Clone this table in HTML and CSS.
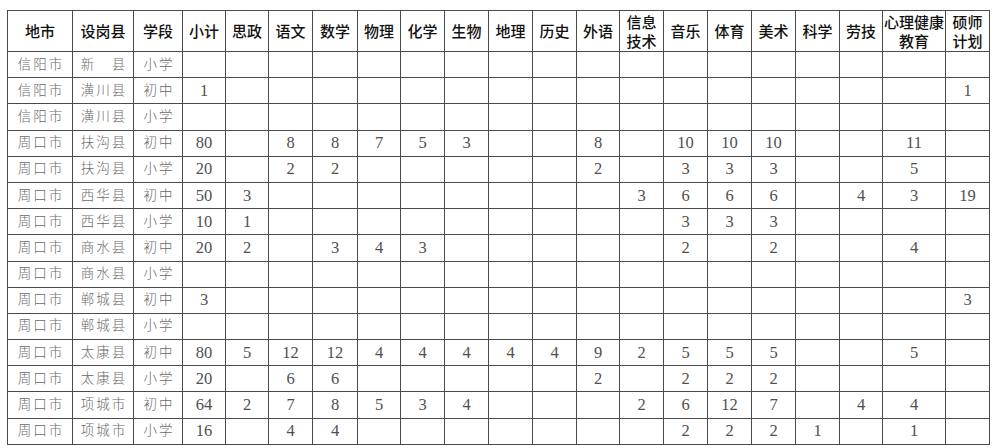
FILE: index.html
```html
<!DOCTYPE html>
<html lang="zh">
<head>
<meta charset="utf-8">
<title>岗位计划表</title>
<link rel="stylesheet" href="styles.css">
</head>
<body>
<table class="plan">
<colgroup>
<col class="w65"><col class="w61"><col class="w49"><col class="w43"><col class="w43"><col class="w44"><col class="w45"><col class="w43"><col class="w44"><col class="w44"><col class="w44"><col class="w44"><col class="w43"><col class="w44"><col class="w44"><col class="w44"><col class="w44"><col class="w44"><col class="w43"><col class="w63"><col class="w44">
</colgroup>
<thead>
<tr><th>地市</th><th>设岗县</th><th>学段</th><th>小计</th><th>思政</th><th>语文</th><th>数学</th><th>物理</th><th>化学</th><th>生物</th><th>地理</th><th>历史</th><th>外语</th><th>信息<br>技术</th><th>音乐</th><th>体育</th><th>美术</th><th>科学</th><th>劳技</th><th>心理健康<br>教育</th><th>硕师<br>计划</th></tr>
</thead>
<tbody>
<tr><td class="t">信阳市</td><td class="t">新　县</td><td class="t">小学</td><td></td><td></td><td></td><td></td><td></td><td></td><td></td><td></td><td></td><td></td><td></td><td></td><td></td><td></td><td></td><td></td><td></td><td></td></tr>
<tr><td class="t">信阳市</td><td class="t">潢川县</td><td class="t">初中</td><td>1</td><td></td><td></td><td></td><td></td><td></td><td></td><td></td><td></td><td></td><td></td><td></td><td></td><td></td><td></td><td></td><td></td><td>1</td></tr>
<tr><td class="t">信阳市</td><td class="t">潢川县</td><td class="t">小学</td><td></td><td></td><td></td><td></td><td></td><td></td><td></td><td></td><td></td><td></td><td></td><td></td><td></td><td></td><td></td><td></td><td></td><td></td></tr>
<tr><td class="t">周口市</td><td class="t">扶沟县</td><td class="t">初中</td><td>80</td><td></td><td>8</td><td>8</td><td>7</td><td>5</td><td>3</td><td></td><td></td><td>8</td><td></td><td>10</td><td>10</td><td>10</td><td></td><td></td><td>11</td><td></td></tr>
<tr><td class="t">周口市</td><td class="t">扶沟县</td><td class="t">小学</td><td>20</td><td></td><td>2</td><td>2</td><td></td><td></td><td></td><td></td><td></td><td>2</td><td></td><td>3</td><td>3</td><td>3</td><td></td><td></td><td>5</td><td></td></tr>
<tr><td class="t">周口市</td><td class="t">西华县</td><td class="t">初中</td><td>50</td><td>3</td><td></td><td></td><td></td><td></td><td></td><td></td><td></td><td></td><td>3</td><td>6</td><td>6</td><td>6</td><td></td><td>4</td><td>3</td><td>19</td></tr>
<tr><td class="t">周口市</td><td class="t">西华县</td><td class="t">小学</td><td>10</td><td>1</td><td></td><td></td><td></td><td></td><td></td><td></td><td></td><td></td><td></td><td>3</td><td>3</td><td>3</td><td></td><td></td><td></td><td></td></tr>
<tr><td class="t">周口市</td><td class="t">商水县</td><td class="t">初中</td><td>20</td><td>2</td><td></td><td>3</td><td>4</td><td>3</td><td></td><td></td><td></td><td></td><td></td><td>2</td><td></td><td>2</td><td></td><td></td><td>4</td><td></td></tr>
<tr><td class="t">周口市</td><td class="t">商水县</td><td class="t">小学</td><td></td><td></td><td></td><td></td><td></td><td></td><td></td><td></td><td></td><td></td><td></td><td></td><td></td><td></td><td></td><td></td><td></td><td></td></tr>
<tr><td class="t">周口市</td><td class="t">郸城县</td><td class="t">初中</td><td>3</td><td></td><td></td><td></td><td></td><td></td><td></td><td></td><td></td><td></td><td></td><td></td><td></td><td></td><td></td><td></td><td></td><td>3</td></tr>
<tr><td class="t">周口市</td><td class="t">郸城县</td><td class="t">小学</td><td></td><td></td><td></td><td></td><td></td><td></td><td></td><td></td><td></td><td></td><td></td><td></td><td></td><td></td><td></td><td></td><td></td><td></td></tr>
<tr><td class="t">周口市</td><td class="t">太康县</td><td class="t">初中</td><td>80</td><td>5</td><td>12</td><td>12</td><td>4</td><td>4</td><td>4</td><td>4</td><td>4</td><td>9</td><td>2</td><td>5</td><td>5</td><td>5</td><td></td><td></td><td>5</td><td></td></tr>
<tr><td class="t">周口市</td><td class="t">太康县</td><td class="t">小学</td><td>20</td><td></td><td>6</td><td>6</td><td></td><td></td><td></td><td></td><td></td><td>2</td><td></td><td>2</td><td>2</td><td>2</td><td></td><td></td><td></td><td></td></tr>
<tr><td class="t">周口市</td><td class="t">项城市</td><td class="t">初中</td><td>64</td><td>2</td><td>7</td><td>8</td><td>5</td><td>3</td><td>4</td><td></td><td></td><td></td><td>2</td><td>6</td><td>12</td><td>7</td><td></td><td>4</td><td>4</td><td></td></tr>
<tr><td class="t">周口市</td><td class="t">项城市</td><td class="t">小学</td><td>16</td><td></td><td>4</td><td>4</td><td></td><td></td><td></td><td></td><td></td><td></td><td></td><td>2</td><td>2</td><td>2</td><td>1</td><td></td><td>1</td><td></td></tr>
</tbody>
</table>
</body>
</html>
```
FILE: styles.css
```css
html, body {
  margin: 0;
  background: #ffffff;
}
body {
  padding: 10px 0 0 7px;
}
.plan {
  border-collapse: collapse;
  table-layout: fixed;
  width: 983px;
  border: 1px solid #8a8a8a;
}
.w65 { width: 65px; }
.w61 { width: 61px; }
.w49 { width: 49px; }
.w45 { width: 45px; }
.w44 { width: 44px; }
.w43 { width: 43px; }
.w63 { width: 63px; }
.plan th,
.plan td {
  border: 1px solid #4a4a4a;
  padding: 0;
  text-align: center;
  vertical-align: middle;
  overflow: hidden;
  white-space: nowrap;
}
.plan th {
  height: 39px;
  font-family: "Liberation Sans", "Noto Sans CJK SC", sans-serif;
  font-size: 15px;
  font-weight: 500;
  line-height: 19px;
  color: #111111;
  padding-top: 1px;
}
.plan td {
  height: 25.2px;
  font-family: "Liberation Serif", serif;
  font-size: 16.5px;
  color: #505050;
  line-height: 20px;
}
.plan td.t {
  font-family: "Liberation Serif", "Noto Sans CJK SC", sans-serif;
  font-size: 13.5px;
  font-weight: 300;
  letter-spacing: 2px;
  text-indent: 2px;
  color: #6a6a6a;
}
```
